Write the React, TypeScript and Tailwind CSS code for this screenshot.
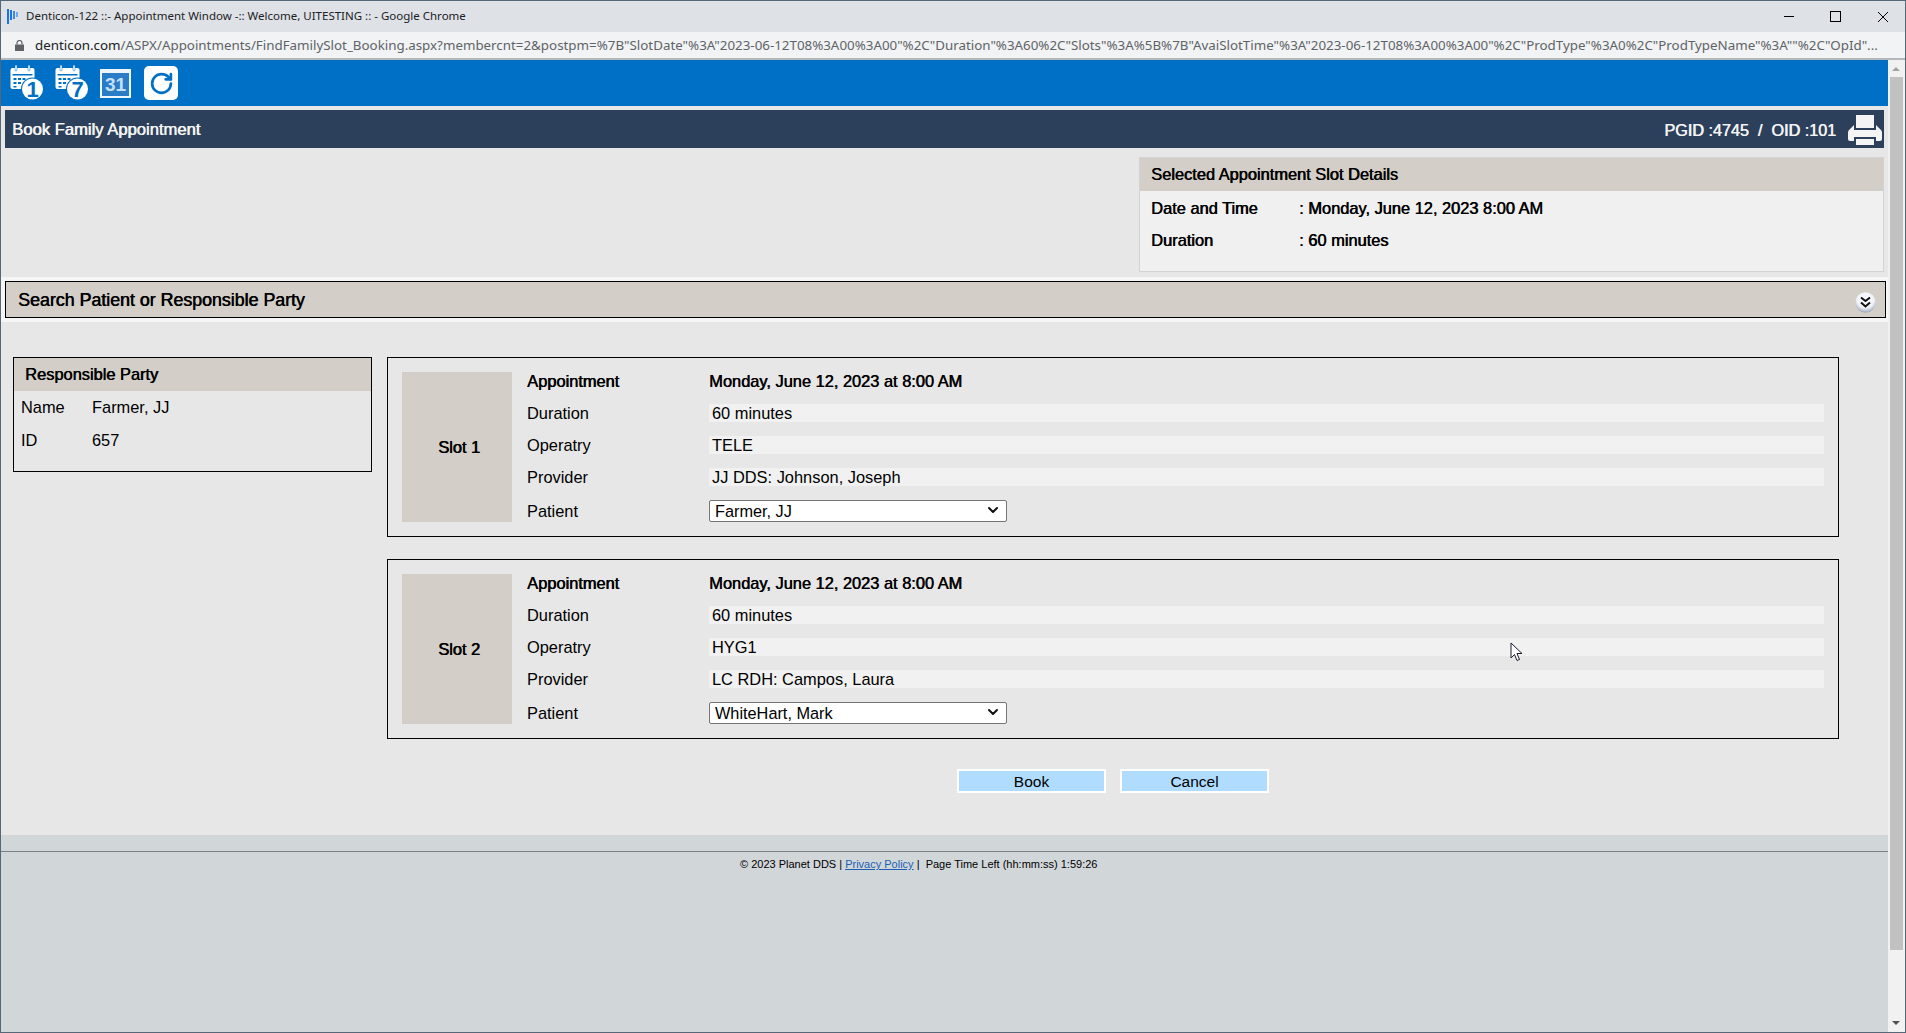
import { ChevronDown, RotateCw } from "lucide-react";

const boldish = "[text-shadow:0.6px_0_0_currentColor]";

const slots = [
  { name: "Slot 1", operatory: "TELE", provider: "JJ DDS: Johnson, Joseph", patient: "Farmer, JJ" },
  { name: "Slot 2", operatory: "HYG1", provider: "LC RDH: Campos, Laura", patient: "WhiteHart, Mark" },
];

function CalendarIcon({ digit }: { digit: string }) {
  return (
    <svg width="34" height="36" viewBox="0 0 34 36">
      <rect x="0.5" y="3" width="24" height="21" rx="2" fill="#fff" />
      <rect x="2.5" y="9" width="20" height="1.5" fill="#0070c6" />
      <rect x="5" y="0" width="2" height="6" rx="1" fill="#fff" stroke="#0070c6" strokeWidth="0.5" />
      <rect x="18" y="0" width="2" height="6" rx="1" fill="#fff" stroke="#0070c6" strokeWidth="0.5" />
      <g fill="#0070c6">
        <rect x="3.5" y="13" width="3" height="2" />
        <rect x="8" y="13" width="3" height="2" />
        <rect x="12.5" y="13" width="3" height="2" />
        <rect x="3.5" y="17" width="3" height="2" />
        <rect x="8" y="17" width="3" height="2" />
        <rect x="3.5" y="21" width="3" height="1.5" />
      </g>
      <circle cx="22.500" cy="24" r="11.500" fill="#0070c6" />
      <circle cx="22.500" cy="24" r="10.500" fill="#fff" />
      <text x="22.500" y="32" textAnchor="middle" fontSize="22" fontWeight="700" fontFamily="Liberation Sans, sans-serif" fill="#0070c6">
        {digit}
      </text>
    </svg>
  );
}

function MonthIcon() {
  return (
    <div className="flex h-[29px] w-[31px] items-center justify-center border-2 border-t-[4px] border-[#eef5fb] bg-[#2a7cc6] text-[19px] leading-none font-bold text-[#c4e0f6]">
      31
    </div>
  );
}

function PrinterIcon() {
  return (
    <svg width="34" height="31" viewBox="0 0 34 31" fill="#f4f4f4">
      <path d="M8 1h18v13H8z" />
      <path d="M6 11v5h22v-5l5 5c.7.7 1 1.5 1 2.500V25a2 2 0 0 1-2 2h-4v-4H6v4H2a2 2 0 0 1-2-2v-6.500C0 17.500.3 16.700 1 16z" />
      <path d="M8 25h18v6H8z" />
    </svg>
  );
}

function CollapseIcon() {
  return (
    <svg width="21" height="21" viewBox="0 0 21 21" className="mt-[5px]">
      <defs>
        <radialGradient id="knob" cx="50%" cy="35%" r="65%">
          <stop offset="0%" stopColor="#ffffff" />
          <stop offset="65%" stopColor="#f0f2f7" />
          <stop offset="100%" stopColor="#9aa5b8" />
        </radialGradient>
      </defs>
      <circle cx="10.500" cy="10.500" r="10.200" fill="url(#knob)" />
      <path d="M6 5.500l4.500 3.500 4.500-3.500M6 10.500l4.500 4 4.500-4" fill="none" stroke="#111" strokeWidth="2" />
    </svg>
  );
}

function Favicon() {
  return (
    <svg width="12" height="15" viewBox="0 0 12 15" fill="#1a73e8">
      <rect x="0" y="0" width="2" height="15" />
      <rect x="3" y="1" width="2" height="10" />
      <rect x="6" y="2" width="2" height="8" fill="#3a88ea" />
      <rect x="9" y="3" width="2" height="5" fill="#6aa8ef" />
    </svg>
  );
}

function SlotCard({ slot }: { slot: (typeof slots)[number] }) {
  const rowCls = "flex h-[18px] items-center";
  const labelCls = "w-[182px] shrink-0 pt-[1px]";
  const valueCls = "h-[18px] flex-1 bg-[#f1f1f1] pl-[3px] leading-[19px]";
  return (
    <div className="flex h-[180px] gap-[15px] border border-black p-[14px]">
      <div className={`flex w-[110px] shrink-0 items-center justify-center bg-[#d3cfc8] pt-[1px] pl-[4px] ${boldish}`}>
        {slot.name}
      </div>
      <div className="flex flex-1 flex-col gap-[14px]">
        <div className={`${rowCls} ${boldish}`}>
          <div className={labelCls}>Appointment</div>
          <div className="pt-[1px]">Monday, June 12, 2023 at 8:00 AM</div>
        </div>
        <div className={rowCls}>
          <div className={labelCls}>Duration</div>
          <div className={valueCls}>60 minutes</div>
        </div>
        <div className={rowCls}>
          <div className={labelCls}>Operatry</div>
          <div className={valueCls}>{slot.operatory}</div>
        </div>
        <div className={rowCls}>
          <div className={labelCls}>Provider</div>
          <div className={valueCls}>{slot.provider}</div>
        </div>
        <div className="flex h-[22px] items-center">
          <div className={labelCls}>Patient</div>
          <div className="relative mb-[2px] h-[22px] w-[298px]">
            <select
              defaultValue={slot.patient}
              className="h-[22px] w-full appearance-none rounded-[2px] border border-[#767676] bg-white pl-[5px] text-[16.300px] leading-[18px] text-black"
            >
              <option>{slot.patient}</option>
            </select>
            <ChevronDown size={16} strokeWidth={3} color="#111" className="pointer-events-none absolute top-[3px] right-[6px]" />
          </div>
        </div>
      </div>
    </div>
  );
}

export default function App() {
  return (
    <div className="relative flex h-[1033px] w-[1906px] flex-col overflow-hidden border border-[#566777] bg-[#d1d6d9] font-['Liberation_Sans',Arial,sans-serif] text-[16.400px] text-black">
      {/* window title bar */}
      <div className="flex h-[31px] shrink-0 items-center bg-[#dee1e6] pl-[6px] font-['Noto_Sans',sans-serif] text-[11.500px] text-[#202124]">
        <Favicon />
        <span className="mb-[2px] ml-[7px]">Denticon-122 ::- Appointment Window -:: Welcome, UITESTING :: - Google Chrome</span>
        <div className="ml-auto flex items-center gap-[36px] pr-[16px]">
          <div className="h-[1px] w-[10px] bg-black" />
          <div className="h-[11px] w-[11px] border border-black" />
          <svg width="12" height="12" viewBox="0 0 12 12" stroke="#000" strokeWidth="1">
            <path d="M1 1l10 10M11 1L1 11" />
          </svg>
        </div>
      </div>

      {/* address bar */}
      <div className="flex h-[28px] shrink-0 items-center border-b-2 border-[#b4b8bb] bg-[#f1f3f4] pl-[14px] font-['Noto_Sans',sans-serif] text-[13.350px] text-[#5f6368]">
        <svg width="9" height="11" viewBox="0 0 9 11" fill="#5f6368" className="shrink-0">
          <path d="M0 4.500h9V11H0z" />
          <path d="M2 4.500V3a2.500 2.500 0 0 1 5 0v1.500" fill="none" stroke="#5f6368" strokeWidth="1.200" />
        </svg>
        <div className="ml-[11px] whitespace-nowrap">
          <span className="text-[#202124]">denticon.com</span>
          /ASPX/Appointments/FindFamilySlot_Booking.aspx?membercnt=2&amp;postpm=%7B"SlotDate"%3A"2023-06-12T08%3A00%3A00"%2C"Duration"%3A60%2C"Slots"%3A%5B%7B"AvaiSlotTime"%3A"2023-06-12T08%3A00%3A00"%2C"ProdType"%3A0%2C"ProdTypeName"%3A""%2C"OpId"...
        </div>
      </div>

      <div className="flex min-h-0 flex-1">
        <div className="flex min-w-0 flex-1 flex-col bg-[#e7e7e7]">
          {/* toolbar */}
          <div className="flex h-[46px] shrink-0 items-center gap-[11px] bg-[#0070c6] pl-[9px]">
            <CalendarIcon digit="1" />
            <CalendarIcon digit="7" />
            <MonthIcon />
            <div className="ml-[2px] flex h-[34px] w-[34px] items-center justify-center rounded-[5px] bg-white">
              <RotateCw size={25} strokeWidth={2.6} color="#0070c6" />
            </div>
          </div>

          {/* page heading */}
          <div className={`mx-1 mt-1 flex h-[38px] shrink-0 items-center justify-between bg-[#2c405b] pr-[2px] pl-[7px] text-[#f4f4f4] ${boldish}`}>
            <span className="pt-[2px] text-[16.600px]">Book Family Appointment</span>
            <div className="flex items-center gap-[12px]">
              <span className="pt-[2px] text-[16.200px] whitespace-pre">PGID :4745  /  OID :101</span>
              <PrinterIcon />
            </div>
          </div>

          {/* selected slot */}
          <div className="mt-[9px] mr-1 h-[115px] w-[745px] shrink-0 self-end border border-[#d3d3d3] bg-[#f0f0f0]">
            <div className={`flex h-[33px] items-center bg-[#d3cfc8] pl-[11px] ${boldish}`}>
              Selected Appointment Slot Details
            </div>
            <div className={`flex h-[34px] items-center pl-[11px] ${boldish}`}>
              <span className="w-[148px]">Date and Time</span>
              <span>: Monday, June 12, 2023 8:00 AM</span>
            </div>
            <div className={`flex h-[31px] items-center pl-[11px] ${boldish}`}>
              <span className="w-[148px]">Duration</span>
              <span>: 60 minutes</span>
            </div>
          </div>

          {/* search section */}
          <div className="mt-[5px] shrink-0 bg-[#f6f6f6] py-1 pr-[2px] pl-1">
            <div className="flex h-[37px] items-center justify-between border border-black bg-[#d3cfc8] pr-[9px] pl-[12px]">
              <span className={`pt-[2px] text-[17.800px] ${boldish}`}>Search Patient or Responsible Party</span>
              <CollapseIcon />
            </div>
          </div>

          <div className="mt-[35px] flex items-start gap-[15px] pl-3">
            {/* responsible party */}
            <div className="h-[115px] w-[359px] shrink-0 border border-black">
              <div className={`flex h-[33px] items-center bg-[#d3cfc8] pl-[11px] ${boldish}`}>Responsible Party</div>
              <div className="flex h-[32px] items-center pl-[7px]">
                <span className="w-[71px]">Name</span>
                <span>Farmer, JJ</span>
              </div>
              <div className="flex h-[34px] items-center pl-[7px]">
                <span className="w-[71px]">ID</span>
                <span>657</span>
              </div>
            </div>

            <div className="flex w-[1452px] shrink-0 flex-col">
              <div className="flex flex-col gap-[22px]">
                {slots.map((s) => (
                  <SlotCard key={s.name} slot={s} />
                ))}
              </div>
              <div className="mt-[30px] flex justify-center gap-[14px]">
                <button className="h-[24px] w-[149px] border-2 border-white bg-[#b0dcff] pt-[1px] text-[15.500px] leading-none">Book</button>
                <button className="h-[24px] w-[149px] border-2 border-white bg-[#b0dcff] pt-[1px] text-[15.500px] leading-none">Cancel</button>
              </div>
            </div>
          </div>

          {/* footer */}
          <div className="mt-[42px] flex-1 bg-[#d1d6d9]">
            <div className="mt-[16px] border-t border-[#7a8288] pt-[5px] pl-[739px] text-[11px] leading-[14px] whitespace-pre">
              © 2023 Planet DDS | <span className="text-[#1a5fb4] underline">Privacy Policy</span> |  Page Time Left (hh:mm:ss) 1:59:26
            </div>
          </div>
        </div>

        {/* scrollbar */}
        <div className="flex w-[17px] shrink-0 flex-col bg-[#f1f1f1] pl-[2px]">
          <div className="flex h-[17px] items-center justify-center pt-[1px] pr-[4px]">
            <div className="h-0 w-0 border-x-[4px] border-b-[4px] border-x-transparent border-b-[#a3a3a3]" />
          </div>
          <div className="h-[873px] w-[13px] bg-[#c1c1c1]" />
          <div className="flex flex-1 items-end justify-center pr-[4px] pb-[7px]">
            <div className="h-0 w-0 border-x-[4px] border-t-[4px] border-x-transparent border-t-[#505050]" />
          </div>
        </div>
      </div>

      {/* mouse pointer */}
      <svg width="13" height="20" viewBox="0 0 13 20" className="absolute top-[641px] left-[1509px]">
        <path d="M1 1v15l3.500-3.500 2.500 6 2.500-1-2.500-6H12z" fill="#fff" stroke="#1c1c2c" strokeWidth="1" />
      </svg>
    </div>
  );
}
